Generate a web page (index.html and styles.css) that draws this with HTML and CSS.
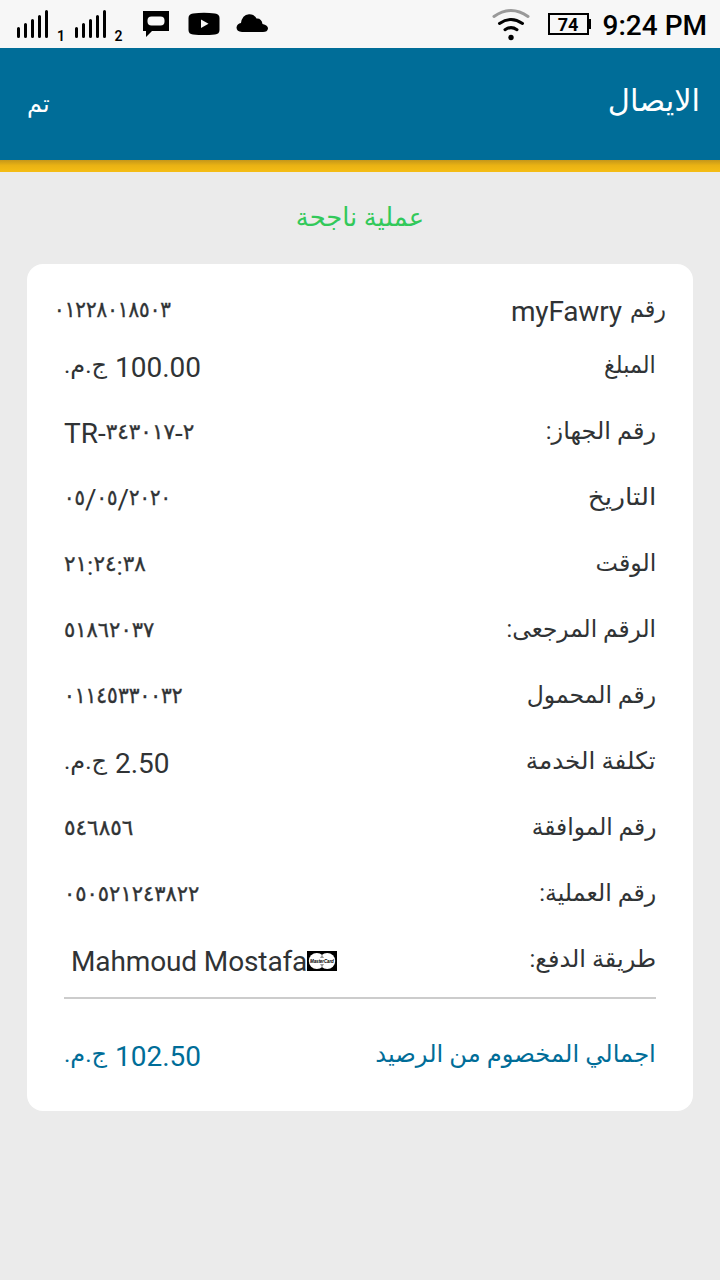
FILE: index.html
```html
<!DOCTYPE html>
<html lang="ar">
<head>
<meta charset="utf-8">
<title>الايصال</title>
<link rel="stylesheet" href="styles.css">
</head>
<body>
<div class="status">
  <svg class="status-icons" width="280" height="48" viewBox="0 0 280 48">
    <g stroke="#000" stroke-width="3" stroke-linecap="round">
      <path d="M18.5 28.5V36.5M25.5 24.5V36.5M32.5 20.5V36.5M39.5 16.5V36.5M46.5 11.5V36.5"/>
      <path d="M76.500 28.500V36.500M83.500 24.500V36.500M90.500 20.500V36.500M97.500 16.500V36.500M104.500 11.500V36.500"/>
    </g>
    <text class="sim" x="57" y="40.500">1</text>
    <text class="sim" x="114.500" y="40.500">2</text>
    <path d="M143 11H169V31H152L146 37V31H143Z"/>
    <rect x="147.500" y="16.500" width="17" height="9" rx="4" fill="#f7f7f7"/>
    <path d="M193 13.500Q204 12 215 13.500Q219.500 14 219.500 18V30Q219.500 34 215 34.500Q204 35.500 193 34.500Q188.500 34 188.500 30V18Q188.500 14 193 13.500Z"/>
    <path d="M201 19.500V28L208.500 23.700Z" fill="#f7f7f7"/>
    <path d="M242 32Q236.500 31.500 236.500 27.500Q237 23.500 241 23Q242 15 249 14.200Q254 14 256.500 18.500Q261.500 18 262.500 24Q268 25 268 28.500Q267.500 32 263 32Z"/>
  </svg>
  <div class="status-end">
    <svg width="38" height="48" viewBox="492 0 38 48" fill="none" stroke-linecap="round" stroke-width="3">
      <path d="M494 16.500Q511 4.500 528 16.500" stroke="#999"/>
      <path d="M499.500 23.500Q511 15.500 522.500 23.500M505 29.700Q511 25.500 517 29.700" stroke="#000"/>
      <circle cx="511" cy="37.500" r="2.700" fill="#000"/>
    </svg>
    <div class="battery">74</div>
    <div class="clock">9:24 PM</div>
  </div>
</div>
<header class="bar">
  <div class="done ar">تم</div>
  <h1 class="title ar">الايصال</h1>
</header>
<div class="stripe"></div>
<p class="result ar">عملية ناجحة</p>
<main class="card">
  <div class="row first"><span class="label"><span class="ar w92">رقم</span><span class="brand">myFawry</span></span><span class="value"><span class="num">٠١٢٢٨٠١٨٥٠٣</span></span></div>
  <div class="row"><span class="ar w93">المبلغ</span><span class="money">100.00 <span class="ar">ج.م.</span></span></div>
  <div class="row"><span class="ar w100">رقم الجهاز:</span><span class="value loose">TR-<span class="num">٣٤٣٠١٧</span>-<span class="num">٢</span></span></div>
  <div class="row"><span class="ar w110">التاريخ</span><span class="value date"><span class="num">٠٥</span>/<span class="num">٠٥</span>/<span class="num">٢٠٢٠</span></span></div>
  <div class="row"><span class="ar w99">الوقت</span><span class="value loose time"><span class="num">٢١</span>:<span class="num">٢٤</span>:<span class="num">٣٨</span></span></div>
  <div class="row"><span class="ar w97">الرقم المرجعى:</span><span class="value medium"><span class="num">٥١٨٦٢٠٣٧</span></span></div>
  <div class="row"><span class="ar w98">رقم المحمول</span><span class="value snug"><span class="num">٠١١٤٥٣٣٠٠٣٢</span></span></div>
  <div class="row"><span class="ar w102">تكلفة الخدمة</span><span class="money">2.50 <span class="ar">ج.م.</span></span></div>
  <div class="row"><span class="ar w97">رقم الموافقة</span><span class="value loose"><span class="num">٥٤٦٨٥٦</span></span></div>
  <div class="row"><span class="ar w99">رقم العملية:</span><span class="value medium"><span class="num">٠٥٠٥٢١٢٤٣٨٢٢</span></span></div>
  <div class="row"><span class="ar">طريقة الدفع:</span><span class="value payer">Mahmoud Mostafa<svg class="mc" width="30" height="20" viewBox="0 0 30 20"><rect width="30" height="20"/><circle cx="9.800" cy="10" r="8" fill="#fff"/><circle cx="20.200" cy="10" r="8" fill="#fff"/><path d="M15 3.500L17 7H13ZM13 13H17L15 16.500Z" fill="#999"/><text class="mc-name" x="3" y="12">MasterCard</text></svg></span></div>
  <div class="rule"></div>
  <div class="row total"><span class="ar w101">اجمالي المخصوم من الرصيد</span><span class="money">102.50 <span class="ar">ج.م.</span></span></div>
</main>
</body>
</html>
```
FILE: styles.css
```css
* { box-sizing: border-box; }
body { margin: 0; width: 720px; height: 1280px; background: #ebebeb; color: #303335; font-family: Roboto, "DejaVu Sans", sans-serif; overflow: hidden; }
.status { height: 48px; display: flex; justify-content: space-between; background: #f7f7f7; color: #000; }
.sim { font: 600 14px Roboto, sans-serif; }
.status-end { display: flex; align-items: center; padding-right: 13px; }
.battery { position: relative; width: 41px; height: 22px; margin: 0 14px 0 18px; border: 2px solid #000; font: 700 18px/20px Roboto, sans-serif; text-align: center; }
.battery::after { content: ""; position: absolute; right: -4px; top: 4px; width: 2px; height: 10px; background: #000; }
.clock { font: 500 28px/48px Roboto, sans-serif; padding-top: 3px; white-space: nowrap; }
.bar { height: 112px; padding: 0 20px 6px 27px; display: flex; justify-content: space-between; align-items: center; background: #006d98; color: #fff; }
.title { margin: 0; font-size: 30.5px; font-weight: 400; line-height: 1; }
.done { font-size: 24px; line-height: 1; padding-top: 6px; }
.stripe { height: 12px; background: linear-gradient(#c5971a, #e9b214 45%, #f5bd14); }
.result { margin: 0; height: 92px; line-height: 90px; text-align: center; font-size: 25.8px; color: #32c95a; }
.card { margin: 0 27px; height: 847px; padding: 18px 37px 0; border-radius: 16px; background: #fff; }
.row { height: 66px; display: flex; direction: rtl; justify-content: space-between; align-items: baseline; font-size: 28px; line-height: 66px; white-space: nowrap; }
.first { height: 53px; line-height: 60px; margin: 0 -10px; }
.ar { font-family: Roboto, "DejaVu Sans", sans-serif; direction: rtl; }
.row .ar { display: inline-block; font-size: 24px; line-height: 1; transform: translateY(-4px) scaleX(var(--sx, 1)); transform-origin: right; }
.w92 { --sx: .92; }
.w93 { --sx: .93; }
.w97 { --sx: .97; }
.w98 { --sx: .98; }
.w99 { --sx: .99; }
.w100 { --sx: 1; }
.w101 { --sx: 1.01; }
.w102 { --sx: 1.025; }
.w110 { --sx: 1.1; }
.brand { margin-right: 5px; letter-spacing: -.15px; }
.money { word-spacing: 1px; }
.value { direction: ltr; }
.num { display: inline-block; direction: ltr; unicode-bidi: bidi-override; font-family: "DejaVu Sans Condensed", sans-serif; font-stretch: condensed; font-size: 22px; line-height: 1; -webkit-text-stroke: .35px currentColor; transform: translateY(-4px); }
.loose .num, .medium .num { font-family: "DejaVu Sans", sans-serif; font-stretch: normal; }
.loose .num { font-size: 21.5px; }
.medium .num { font-size: 21px; }
.snug .num { font-size: 22.3px; }
.date .num { font-size: 21.7px; }
.time { font-size: 26px; }
.payer { padding-left: 7px; letter-spacing: -.12px; }
.mc { vertical-align: 0; }
.mc-name { font: italic 700 4.5px "Liberation Sans", sans-serif; letter-spacing: -.1px; }
.rule { height: 2px; margin: 2px 0 25px; background: #ccc; }
.total { color: #006d98; }
```
